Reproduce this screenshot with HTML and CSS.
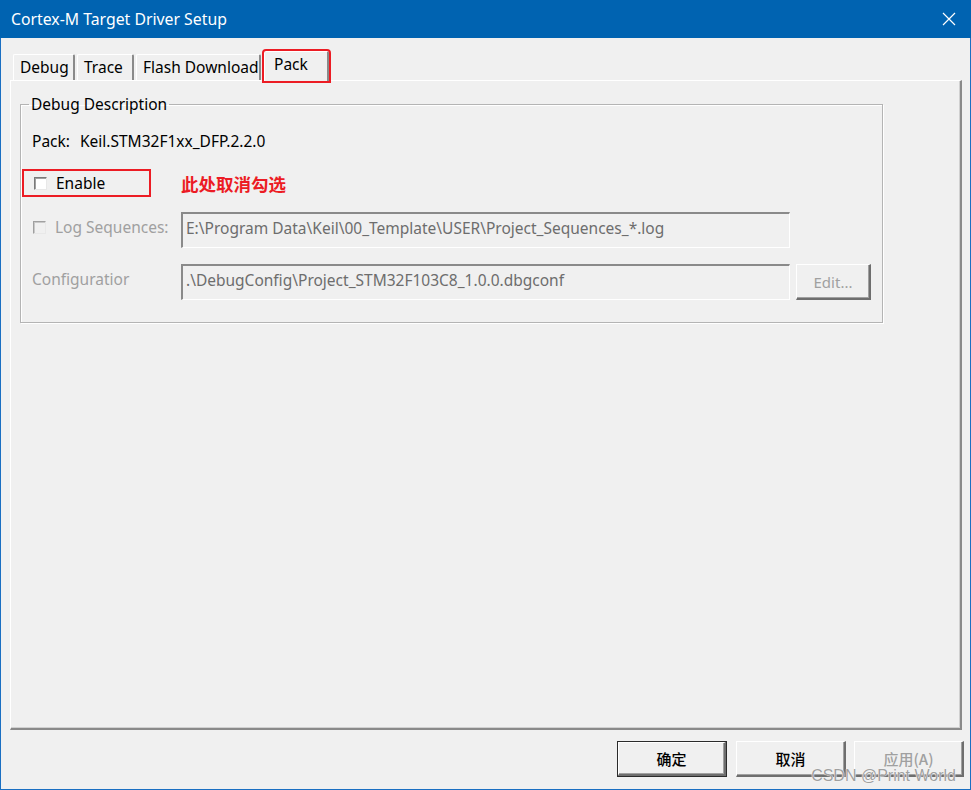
FILE: index.html
```html
<!DOCTYPE html>
<html lang="zh-CN">
<head>
    <meta charset="UTF-8">
    <meta name="viewport" content="width=device-width, initial-scale=1.0">
    <title>Cortex-M Target Driver Setup</title>
    <link rel="stylesheet" href="styles.css">
</head>
<body>
    <div class="window">
        <div class="titlebar">
            <span class="title">Cortex-M Target Driver Setup</span>
            <svg class="close" width="14" height="14" viewBox="0 0 14 14">
                <path d="M1 1 L13 13 M13 1 L1 13" stroke="#fff" stroke-width="1.2" fill="none"/>
            </svg>
        </div>

        <div class="client">
            <div class="tabs">
                <div class="tab tab-debug">Debug</div>
                <div class="tab tab-trace">Trace</div>
                <div class="tab tab-flash">Flash Download</div>
                <div class="tab tab-pack active">Pack</div>
            </div>

            <div class="page">
                <fieldset class="group">
                    <legend>Debug Description</legend>

                    <div class="pack-row">
                        <span>Pack:</span>
                        <span class="pack-name">Keil.STM32F1xx_DFP.2.2.0</span>
                    </div>

                    <div class="enable-row">
                        <div class="enable-box">
                            <span class="check"></span>
                            <span>Enable</span>
                        </div>
                        <span class="note">此处取消勾选</span>
                    </div>

                    <div class="field-row log-row">
                        <div class="field-label">
                            <span class="check disabled"></span>
                            <span>Log Sequences:</span>
                        </div>
                        <div class="edit">E:\Program Data\Keil\00_Template\USER\Project_Sequences_*.log</div>
                    </div>

                    <div class="field-row">
                        <div class="field-label plain">Configuratior</div>
                        <div class="edit">.\DebugConfig\Project_STM32F103C8_1.0.0.dbgconf</div>
                        <div class="btn small disabled">Edit...</div>
                    </div>
                </fieldset>
            </div>

            <div class="buttons">
                <div class="btn default">确定</div>
                <div class="btn">取消</div>
                <div class="btn disabled">应用(A)</div>
            </div>
        </div>

        <div class="watermark">CSDN @Print World</div>
    </div>
</body>
</html>
```

FILE: styles.css
```css
* {
    box-sizing: border-box;
}
body {
    margin: 0;
    font-family: "Noto Sans", "Noto Sans CJK SC", sans-serif;
    font-size: 15.5px;
    color: #000;
    background: #f0f0f0;
}
.window {
    position: relative;
    width: 971px;
    height: 790px;
    border: 1px solid #1a6fc2;
    border-top: none;
    background: #f0f0f0;
    display: flex;
    flex-direction: column;
}
.titlebar {
    height: 38px;
    margin: 0 -1px;
    background: #0063b1;
    color: #fff;
    display: flex;
    align-items: center;
    justify-content: space-between;
    padding: 0 15px 0 11px;
}
.title {
    font-size: 15.8px;
    line-height: 20px;
    margin-top: -1px;
}
.close {
    display: block;
}

.client {
    flex: 1;
    display: flex;
    flex-direction: column;
}

/* Tabs */
.tabs {
    display: flex;
    align-items: flex-end;
    height: 29px;
    margin: 13px 0 0 12px;
}
.tab {
    height: 26px;
    line-height: 24px;
    padding-left: 6px;
    margin-right: 2px;
    border-top: 1px solid #fff;
    border-left: 1px solid #fff;
    border-right: 2px solid #8a8a8a;
    border-radius: 2px 2px 0 0;
    white-space: nowrap;
}
.tab-debug { width: 62px; }
.tab-trace { width: 57px; }
.tab-flash { width: 125px; }
.tab-pack { width: 65px; }
.tab.active {
    position: relative;
    z-index: 1;
    height: 30px;
    margin-left: 1px;
    margin-bottom: -1px;
    line-height: 25px;
    padding-left: 9px;
    background: #f0f0f0;
    outline: 2px solid #ec1c24;
    outline-offset: 0;
}

/* Page */
.page {
    height: 650px;
    margin: 0 8px 0 9px;
    border-top: 1px solid #fff;
    border-left: 1px solid #fff;
    border-right: 2px solid #8a8a8a;
    border-bottom: 2px solid #8a8a8a;
    box-shadow: inset -1px -1px 0 #d0d0d0;
}
.group {
    width: 863px;
    margin: 13px 0 0 9px;
    padding: 0 0 22px 0;
    border: 1px solid #b4b4b4;
    box-shadow: 1px 1px 0 #fff, inset 1px 1px 0 #fff;
}
.group legend {
    margin-left: 8px;
    padding: 0 2px;
    line-height: 20px;
}
.pack-row {
    height: 20px;
    line-height: 20px;
    margin: 17px 0 0 11px;
}
.pack-name {
    margin-left: 6px;
}

.enable-row {
    display: flex;
    align-items: center;
    margin-top: 18px;
}
.enable-box {
    display: flex;
    align-items: center;
    width: 129px;
    height: 28px;
    margin-left: 1px;
    padding-left: 10px;
    border: 2px solid #ec1c24;
}
.note {
    margin-left: 30px;
    color: #ec1c24;
    font-family: "Noto Sans CJK SC", sans-serif;
    font-weight: bold;
    font-size: 17.5px;
}
.check {
    display: inline-block;
    width: 13px;
    height: 13px;
    margin-right: 9px;
    background: #fff;
    border-top: 1px solid #7a7a7a;
    border-left: 1px solid #7a7a7a;
    border-right: 1px solid #e8e8e8;
    border-bottom: 1px solid #e8e8e8;
    box-shadow: inset 1px 1px 0 #a0a0a0;
}
.check.disabled {
    background: #f0f0f0;
    border-top-color: #a0a0a0;
    border-left-color: #a0a0a0;
    box-shadow: inset 1px 1px 0 #c8c8c8;
}

.field-row {
    display: flex;
    align-items: flex-start;
    margin-top: 16px;
}
.log-row {
    margin-top: 15px;
}
.field-label {
    display: flex;
    align-items: center;
    width: 160px;
    height: 30px;
    padding-left: 12px;
    color: #a0a0a0;
}
.field-label.plain {
    padding-left: 11px;
}
.edit {
    width: 609px;
    height: 36px;
    padding: 3px 0 0 3px;
    color: #6d6d6d;
    white-space: nowrap;
    border-top: 2px solid #8a8a8a;
    border-left: 2px solid #8a8a8a;
    border-right: 1px solid #fff;
    border-bottom: 1px solid #fff;
}

/* Buttons */
.btn {
    width: 110px;
    height: 36px;
    display: flex;
    align-items: center;
    justify-content: center;
    font-family: "Noto Sans CJK SC", "Noto Sans", sans-serif;
    font-size: 15px;
    font-weight: 500;
    border-top: 1px solid #fff;
    border-left: 1px solid #fff;
    border-right: 2px solid #6e6e6e;
    border-bottom: 2px solid #6e6e6e;
    box-shadow: inset -1px -1px 0 #a0a0a0;
}
.btn.small {
    width: 75px;
    margin-left: 6px;
    font-family: "Noto Sans", sans-serif;
    font-weight: normal;
}
.btn.disabled {
    color: #a0a0a0;
}
.btn.default {
    outline: 1px solid #2b2b2b;
    outline-offset: -1px;
    border-top: 2px solid #fff;
    border-left: 2px solid #fff;
    border-right: 3px solid #6e6e6e;
    border-bottom: 3px solid #6e6e6e;
}
.buttons {
    display: flex;
    justify-content: flex-end;
    gap: 8px;
    margin: 11px 6px 0 0;
}
.buttons .btn.default {
    margin-right: 1px;
}

.watermark {
    position: absolute;
    right: 14px;
    bottom: 4px;
    font-family: "Liberation Sans", sans-serif;
    font-size: 16px;
    color: #a0a0a0;
    text-shadow: 0 0 1px #fff, 0 0 1px #fff;
}
```
